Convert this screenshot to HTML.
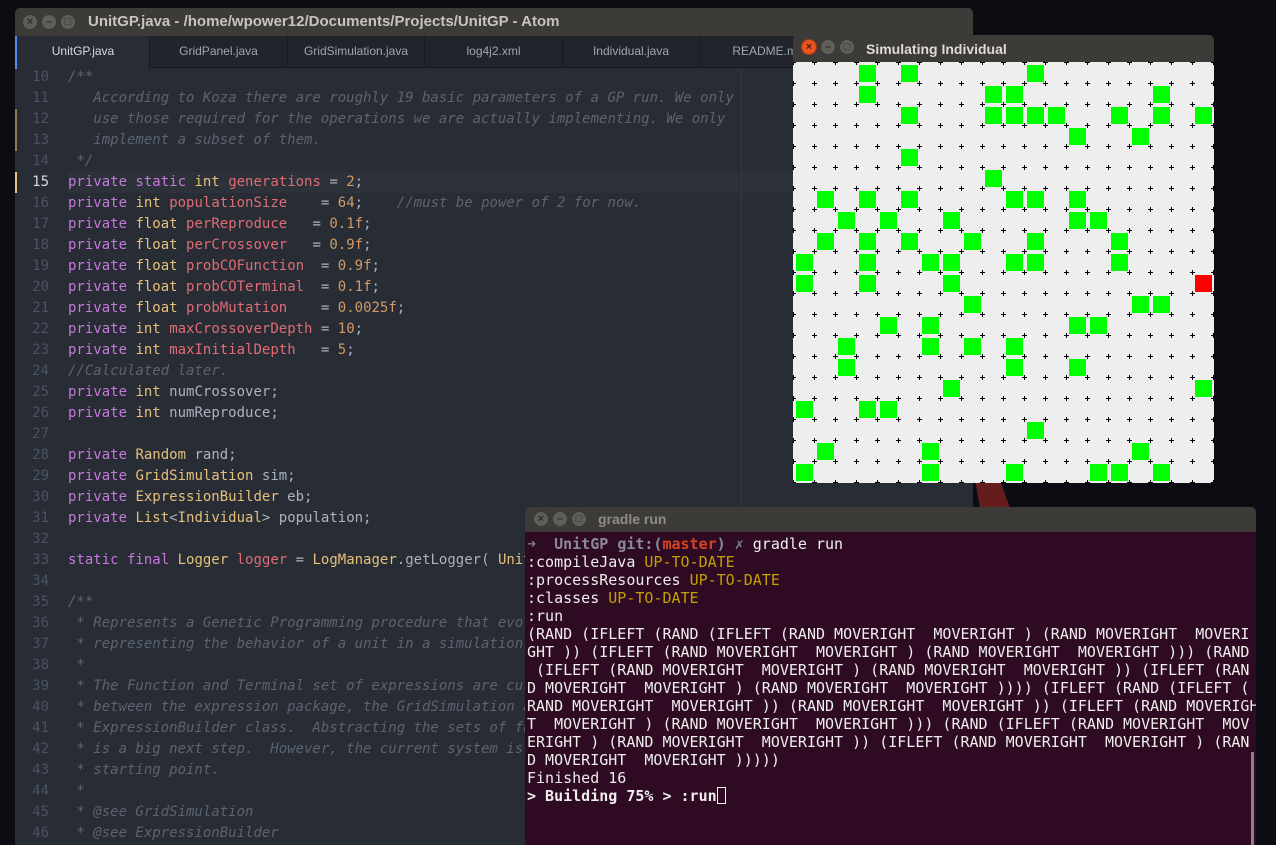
<!DOCTYPE html>
<html><head><meta charset="utf-8"><style>
*{margin:0;padding:0;box-sizing:border-box}
body{width:1276px;height:845px;overflow:hidden;background:#0c0d13;position:relative;font-family:"Liberation Sans",sans-serif}
.abs{position:absolute}
.btn{position:absolute;width:16px;height:16px;border-radius:50%;background:#5f5e59;border:1px solid #3a3935;color:#2e2d2a;font-size:11px;line-height:14px;text-align:center;font-weight:bold}
#ed{left:15px;top:8px;width:958px;height:837px;background:#282c34;border-radius:5px 5px 0 0;overflow:hidden}
#edt{left:0;top:0;width:958px;height:28px;background:#3c3b37;color:#c7c4bd;font-weight:bold;font-size:15px;line-height:28px;padding-left:73px}
#tabs{left:0;top:28px;width:958px;height:32px;background:#21252b;border-bottom:1px solid #181a1f}
.tab{position:absolute;top:0;height:32px;line-height:30px;text-align:center;font-size:12px;color:#9da5b4;border-right:1px solid #181a1f}
pre{font-family:"DejaVu Sans Mono","Liberation Mono",monospace}
#gut{left:0;top:59px;width:34px;font-size:14px;line-height:21px;color:#4b5263;text-align:right}
#code{left:53px;top:59px;font-size:14px;line-height:21px;color:#abb2bf}
.k{color:#c678dd}.t{color:#e5c07b}.v{color:#e06c75}.n{color:#d19a66}.c{color:#5c6370;font-style:italic}
#term{left:525px;top:507px;width:731px;height:338px;background:#2e0a23;border-radius:5px 5px 0 0;overflow:hidden}
#tt{left:0;top:0;width:731px;height:25px;background:#3c3b37;color:#8f8c85;font-weight:bold;font-size:14px;line-height:25px;padding-left:73px}
#tx{left:2px;top:28px;font-size:15px;line-height:18px;color:#eeeeec;white-space:pre}
.y{color:#c4a000}
</style></head><body>
<svg class="abs" style="left:0;top:0" width="1276" height="845"><polygon points="975,480 1000,480 1130,845 1040,845" fill="#7a2020" opacity="0.8"/></svg>

<div id="ed" class="abs">
 <div id="edt" class="abs">UnitGP.java - /home/wpower12/Documents/Projects/UnitGP - Atom</div>
 <div class="btn" style="left:7px;top:6px">×</div><div class="btn" style="left:26px;top:6px">–</div><div class="btn" style="left:45px;top:6px">□</div>
 <div id="tabs" class="abs">
  <div class="tab" style="left:0;width:135px;background:#282c34;color:#d7dae0;border-left:2px solid #568af2;height:33px">UnitGP.java</div>
  <div class="tab" style="left:135px;width:138px">GridPanel.java</div>
  <div class="tab" style="left:273px;width:137px">GridSimulation.java</div>
  <div class="tab" style="left:410px;width:138px">log4j2.xml</div>
  <div class="tab" style="left:548px;width:137px">Individual.java</div>
  <div class="tab" style="left:685px;width:137px">README.md</div>
 </div>
 <div class="abs" style="left:53px;top:164px;width:905px;height:21px;background:#2c313a"></div>
 <div class="abs" style="left:726px;top:60px;width:1px;height:777px;background:#333842"></div>
 <div class="abs" style="left:0;top:101px;width:2px;height:42px;background:#8f7a55"></div>
 <div class="abs" style="left:0;top:164px;width:2px;height:21px;background:#e5c07b"></div>
<pre id="gut" class="abs">10
11
12
13
14
<span style="color:#d7dae0">15</span>
16
17
18
19
20
21
22
23
24
25
26
27
28
29
30
31
32
33
34
35
36
37
38
39
40
41
42
43
44
45
46</pre>
<pre id="code" class="abs"><span class="c">/**
   According to Koza there are roughly 19 basic parameters of a GP run. We only
   use those required for the operations we are actually implementing. We only
   implement a subset of them.
 */</span>
<span class="k">private static</span> <span class="t">int</span> <span class="v">generations</span> = <span class="n">2</span>;
<span class="k">private</span> <span class="t">int</span> <span class="v">populationSize</span>    = <span class="n">64</span>;    <span class="c">//must be power of 2 for now.</span>
<span class="k">private</span> <span class="t">float</span> <span class="v">perReproduce</span>   = <span class="n">0.1f</span>;
<span class="k">private</span> <span class="t">float</span> <span class="v">perCrossover</span>   = <span class="n">0.9f</span>;
<span class="k">private</span> <span class="t">float</span> <span class="v">probCOFunction</span>  = <span class="n">0.9f</span>;
<span class="k">private</span> <span class="t">float</span> <span class="v">probCOTerminal</span>  = <span class="n">0.1f</span>;
<span class="k">private</span> <span class="t">float</span> <span class="v">probMutation</span>    = <span class="n">0.0025f</span>;
<span class="k">private</span> <span class="t">int</span> <span class="v">maxCrossoverDepth</span> = <span class="n">10</span>;
<span class="k">private</span> <span class="t">int</span> <span class="v">maxInitialDepth</span>   = <span class="n">5</span>;
<span class="c">//Calculated later.</span>
<span class="k">private</span> <span class="t">int</span> numCrossover;
<span class="k">private</span> <span class="t">int</span> numReproduce;

<span class="k">private</span> <span class="t">Random</span> rand;
<span class="k">private</span> <span class="t">GridSimulation</span> sim;
<span class="k">private</span> <span class="t">ExpressionBuilder</span> eb;
<span class="k">private</span> <span class="t">List</span>&lt;<span class="t">Individual</span>&gt; population;

<span class="k">static final</span> <span class="t">Logger</span> <span class="v">logger</span> = <span class="t">LogManager</span>.getLogger( <span class="t">UnitGP</span>.class );

<span class="c">/**
 * Represents a Genetic Programming procedure that evolves
 * representing the behavior of a unit in a simulation
 *
 * The Function and Terminal set of expressions are currently
 * between the expression package, the GridSimulation and
 * ExpressionBuilder class.  Abstracting the sets of functions
 * is a big next step.  However, the current system is a
 * starting point.
 *
 * @see GridSimulation
 * @see ExpressionBuilder</span></pre>
</div>

<div class="abs" style="left:793px;top:35px;width:421px;height:28px;background:#3c3b37;border-radius:5px 5px 0 0"></div>
<div class="abs" style="left:866px;top:35px;line-height:28px;font-size:14px;font-weight:bold;color:#dfdbd2">Simulating Individual</div>
<div class="btn" style="left:801px;top:39px;background:#e95420;border-color:#a53a14;color:#5a1a05">×</div>
<div class="btn" style="left:820px;top:39px">–</div><div class="btn" style="left:839px;top:39px">□</div>
<svg class="abs" style="left:793px;top:62px" width="421" height="421">
<defs><pattern id="p" x="-10" y="-10" width="21" height="21" patternUnits="userSpaceOnUse"><rect x="8" y="10" width="5" height="1" fill="#000"/><rect x="10" y="8" width="1" height="5" fill="#000"/></pattern></defs>
<rect width="421" height="421" rx="4" fill="#eeeeee"/>
<rect width="421" height="421" fill="url(#p)"/>
</svg>

<div id="term" class="abs">
 <div id="tt" class="abs">gradle run</div>
 <div class="btn" style="left:8px;top:4px">×</div><div class="btn" style="left:27px;top:4px">–</div><div class="btn" style="left:46px;top:4px">□</div>
 <div class="abs" style="left:726px;top:245px;width:3px;height:93px;background:#8a8088"></div>
<pre id="tx" class="abs"><span style="color:#7e7e80">➜</span>  <b style="color:#8a8a9c">UnitGP</b> <b style="color:#8a8a9c">git:(</b><b style="color:#d9451f">master</b><b style="color:#8a8a9c">)</b> <span style="color:#7e7e90">✗</span> gradle run
:compileJava <span class="y">UP-TO-DATE</span>
:processResources <span class="y">UP-TO-DATE</span>
:classes <span class="y">UP-TO-DATE</span>
:run
(RAND (IFLEFT (RAND (IFLEFT (RAND MOVERIGHT  MOVERIGHT ) (RAND MOVERIGHT  MOVERI
GHT )) (IFLEFT (RAND MOVERIGHT  MOVERIGHT ) (RAND MOVERIGHT  MOVERIGHT ))) (RAND
 (IFLEFT (RAND MOVERIGHT  MOVERIGHT ) (RAND MOVERIGHT  MOVERIGHT )) (IFLEFT (RAN
D MOVERIGHT  MOVERIGHT ) (RAND MOVERIGHT  MOVERIGHT )))) (IFLEFT (RAND (IFLEFT (
RAND MOVERIGHT  MOVERIGHT )) (RAND MOVERIGHT  MOVERIGHT )) (IFLEFT (RAND MOVERIGH
T  MOVERIGHT ) (RAND MOVERIGHT  MOVERIGHT ))) (RAND (IFLEFT (RAND MOVERIGHT  MOV
ERIGHT ) (RAND MOVERIGHT  MOVERIGHT )) (IFLEFT (RAND MOVERIGHT  MOVERIGHT ) (RAN
D MOVERIGHT  MOVERIGHT )))))
Finished 16
<b>&gt; Building 75% &gt; :run</b><span style="display:inline-block;width:9px;height:17px;border:1px solid #eee;vertical-align:-3px"></span></pre>
</div>

<svg class="abs" style="left:793px;top:62px" width="421" height="421">
<g fill="#00ff00">
<rect x="66" y="3" width="17" height="17"/><rect x="108" y="3" width="17" height="17"/><rect x="234" y="3" width="17" height="17"/>
<rect x="66" y="24" width="17" height="17"/><rect x="192" y="24" width="17" height="17"/><rect x="213" y="24" width="17" height="17"/><rect x="360" y="24" width="17" height="17"/>
<rect x="108" y="45" width="17" height="17"/><rect x="192" y="45" width="17" height="17"/><rect x="213" y="45" width="17" height="17"/><rect x="234" y="45" width="17" height="17"/><rect x="255" y="45" width="17" height="17"/><rect x="318" y="45" width="17" height="17"/><rect x="360" y="45" width="17" height="17"/><rect x="402" y="45" width="17" height="17"/>
<rect x="276" y="66" width="17" height="17"/><rect x="339" y="66" width="17" height="17"/>
<rect x="108" y="87" width="17" height="17"/>
<rect x="192" y="108" width="17" height="17"/>
<rect x="24" y="129" width="17" height="17"/><rect x="66" y="129" width="17" height="17"/><rect x="108" y="129" width="17" height="17"/><rect x="213" y="129" width="17" height="17"/><rect x="234" y="129" width="17" height="17"/><rect x="276" y="129" width="17" height="17"/>
<rect x="45" y="150" width="17" height="17"/><rect x="87" y="150" width="17" height="17"/><rect x="150" y="150" width="17" height="17"/><rect x="276" y="150" width="17" height="17"/><rect x="297" y="150" width="17" height="17"/>
<rect x="24" y="171" width="17" height="17"/><rect x="66" y="171" width="17" height="17"/><rect x="108" y="171" width="17" height="17"/><rect x="171" y="171" width="17" height="17"/><rect x="234" y="171" width="17" height="17"/><rect x="318" y="171" width="17" height="17"/>
<rect x="3" y="192" width="17" height="17"/><rect x="66" y="192" width="17" height="17"/><rect x="129" y="192" width="17" height="17"/><rect x="150" y="192" width="17" height="17"/><rect x="213" y="192" width="17" height="17"/><rect x="234" y="192" width="17" height="17"/><rect x="318" y="192" width="17" height="17"/>
<rect x="3" y="213" width="17" height="17"/><rect x="66" y="213" width="17" height="17"/><rect x="150" y="213" width="17" height="17"/>
<rect x="171" y="234" width="17" height="17"/><rect x="339" y="234" width="17" height="17"/><rect x="360" y="234" width="17" height="17"/>
<rect x="87" y="255" width="17" height="17"/><rect x="129" y="255" width="17" height="17"/><rect x="276" y="255" width="17" height="17"/><rect x="297" y="255" width="17" height="17"/>
<rect x="45" y="276" width="17" height="17"/><rect x="129" y="276" width="17" height="17"/><rect x="171" y="276" width="17" height="17"/><rect x="213" y="276" width="17" height="17"/>
<rect x="45" y="297" width="17" height="17"/><rect x="213" y="297" width="17" height="17"/><rect x="276" y="297" width="17" height="17"/>
<rect x="150" y="318" width="17" height="17"/><rect x="402" y="318" width="17" height="17"/>
<rect x="3" y="339" width="17" height="17"/><rect x="66" y="339" width="17" height="17"/><rect x="87" y="339" width="17" height="17"/>
<rect x="234" y="360" width="17" height="17"/>
<rect x="24" y="381" width="17" height="17"/><rect x="129" y="381" width="17" height="17"/><rect x="339" y="381" width="17" height="17"/>
<rect x="3" y="402" width="17" height="17"/><rect x="129" y="402" width="17" height="17"/><rect x="213" y="402" width="17" height="17"/><rect x="297" y="402" width="17" height="17"/><rect x="318" y="402" width="17" height="17"/><rect x="360" y="402" width="17" height="17"/>
</g>
<rect x="402" y="213" width="17" height="17" fill="#ff0000"/>
</svg>
</body></html>
